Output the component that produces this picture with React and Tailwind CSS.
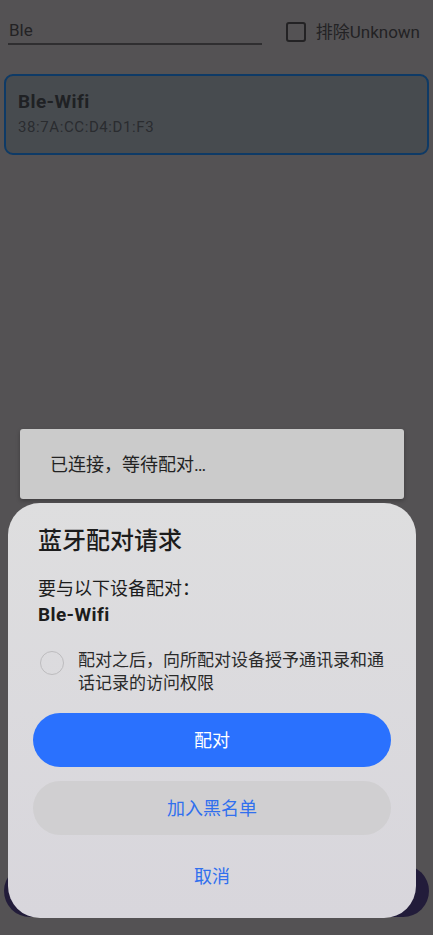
import React from 'react';

const App = () => {
    return (
        <div className="relative h-[935px] w-full overflow-hidden bg-[#545254] font-['Roboto','Noto_Sans_CJK_SC',sans-serif]">
            {/* Page underneath (dimmed) */}
            <div className="flex h-full flex-col">
                <div className="flex items-center pt-[19px] pl-2 pr-[13px]">
                    <div className="w-[254px] border-b-2 border-[#2f2e30] pb-[2px] pl-px text-[17px] leading-[22px] text-[#232224]">
                        Ble
                    </div>
                    <div className="ml-auto flex items-center gap-[10px]">
                        <div className="h-[20px] w-[20px] rounded-[3px] border-2 border-[#232224]" />
                        <span className="text-[17px] leading-[22px] text-[#232224]">排除Unknown</span>
                    </div>
                </div>

                <div className="mx-1 mt-[29px] h-[81px] rounded-[9px] border-2 border-[#0e3a66] bg-[#474b4f] px-[12px] pt-[13px]">
                    <div className="text-[19px] font-bold leading-[26px] tracking-[0.4px] text-[#1f2124]">Ble-Wifi</div>
                    <div className="mt-[1px] text-[15px] leading-[22px] tracking-[0.6px] text-[#2a2c2f]">38:7A:CC:D4:D1:F3</div>
                </div>

                <div className="flex-1" />
                <div className="mx-1 mb-[18px] h-[52px] rounded-[26px] bg-[#221c3a]" />
            </div>

            {/* Toast */}
            <div className="absolute left-[20px] top-[429px] flex h-[70px] w-[384px] items-center rounded-[3px] bg-[#cbcbcb] pl-[30px] shadow-[0_2px_4px_rgba(0,0,0,0.25)]">
                <span className="text-[18px] text-[#232323]">已连接，等待配对…</span>
            </div>

            {/* Pairing dialog */}
            <div className="absolute left-[8px] top-[503px] w-[408px] rounded-[32px] bg-gradient-to-b from-[#dededf] to-[#d8d6dc] pb-[15px] pt-[22px]">
                <div className="px-[30px]">
                    <div className="text-[24px] font-medium leading-[32px] text-[#1c1c1c]">蓝牙配对请求</div>
                    <div className="mt-[19px] text-[18px] leading-[26px] text-[#1c1c1c]">要与以下设备配对：</div>
                    <div className="text-[19px] font-bold leading-[26px] tracking-[0.4px] text-[#1c1c1c]">Ble-Wifi</div>
                </div>

                <div className="mt-[21px] flex pl-[32px] pr-[24px]">
                    <div className="mt-[2px] h-[24px] w-[24px] shrink-0 rounded-full border-[1.5px] border-[#bdbcbe]" />
                    <div className="ml-[14px] text-[17px] leading-[23px] text-[#2a2a2a]">
                        配对之后，向所配对设备授予通讯录和通话记录的访问权限
                    </div>
                </div>

                <div className="mx-[25px] mt-[18px] flex flex-col gap-[14px]">
                    <button className="h-[54px] rounded-[27px] bg-[#2a71fe] text-[18px] text-white">配对</button>
                    <button className="h-[54px] rounded-[27px] bg-[#d0cfd1] text-[18px] text-[#3170ee]">加入黑名单</button>
                    <button className="h-[54px] text-[18px] text-[#3170ee]">取消</button>
                </div>
            </div>
        </div>
    );
};

export default App;
